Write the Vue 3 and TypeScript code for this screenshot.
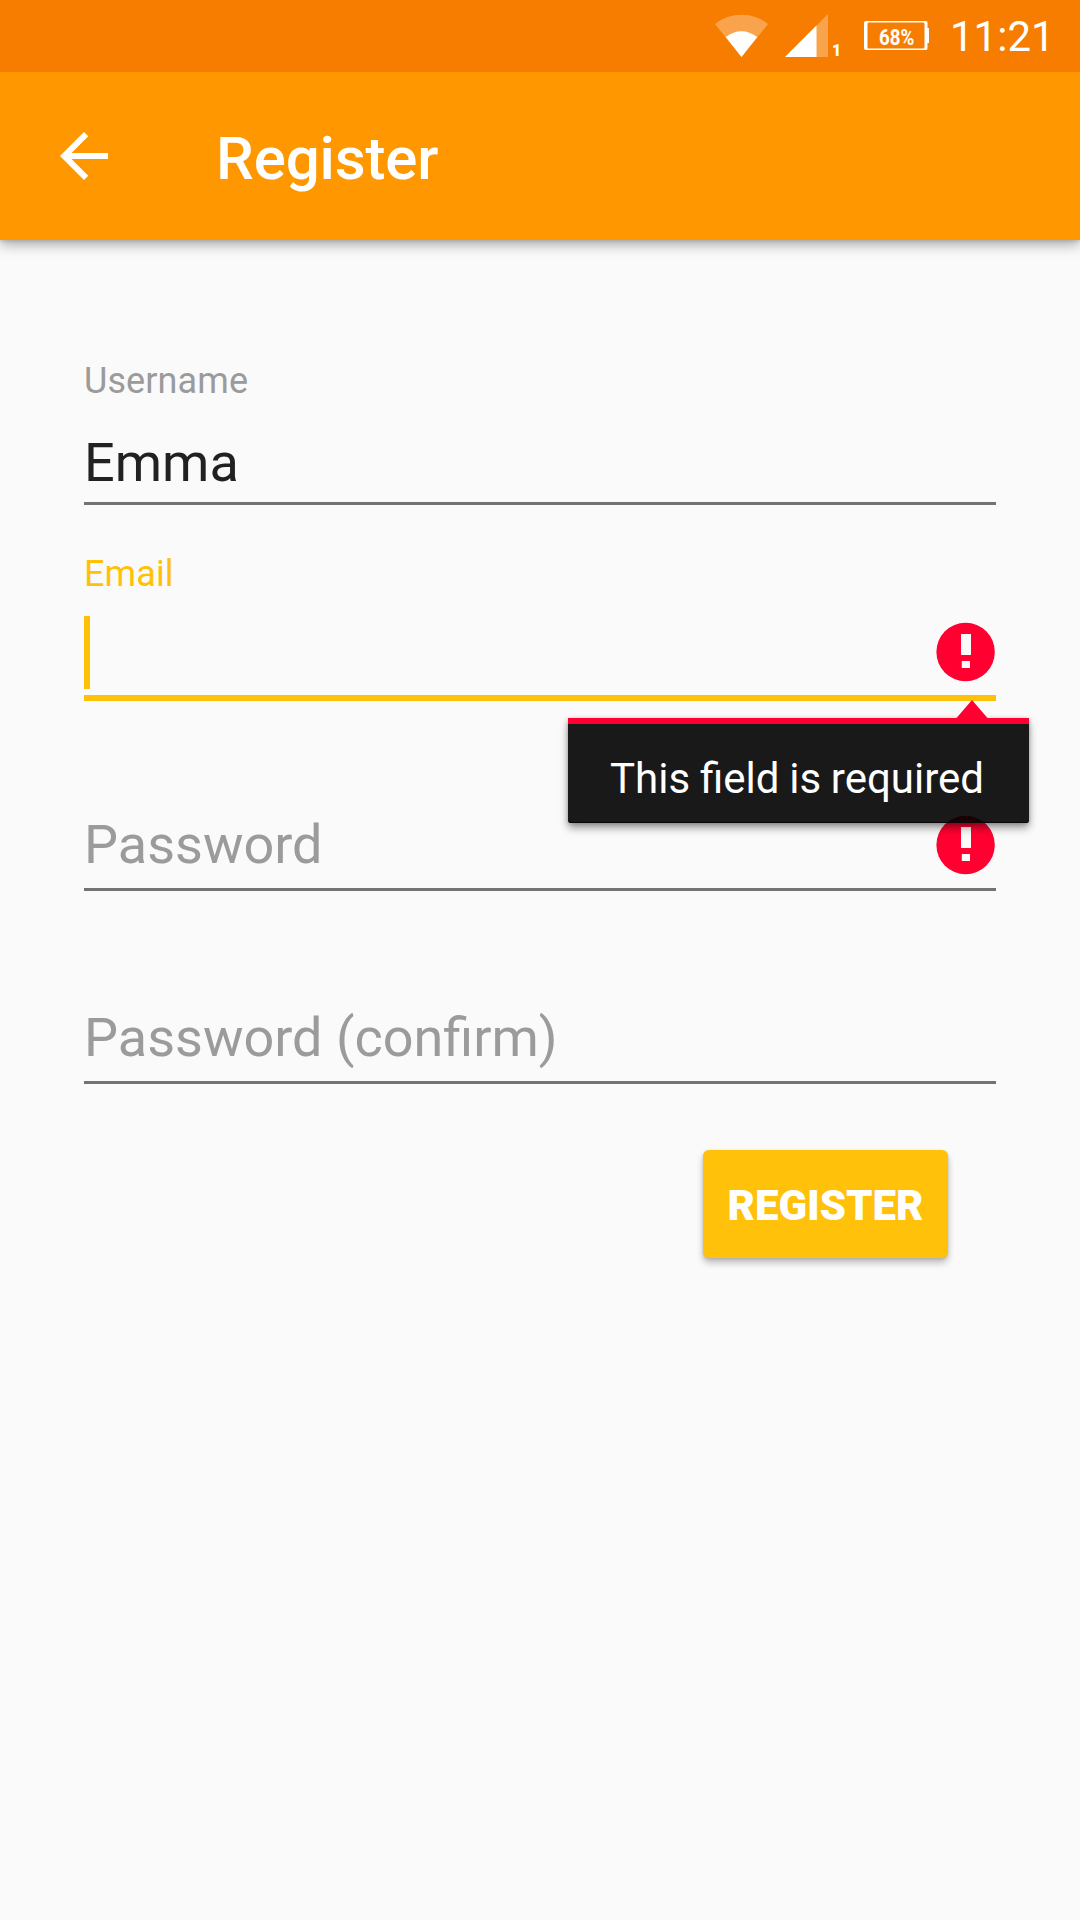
<script setup lang="ts">
interface Field {
  label: string
  value: string
  focused: boolean
  error: string
  showTooltip: boolean
}

const fields: Field[] = [
  { label: 'Username', value: 'Emma', focused: false, error: '', showTooltip: false },
  { label: 'Email', value: '', focused: true, error: 'This field is required', showTooltip: true },
  { label: 'Password', value: '', focused: false, error: 'This field is required', showTooltip: false },
  { label: 'Password (confirm)', value: '', focused: false, error: '', showTooltip: false },
]
</script>

<template>
  <div class="screen">
    <div class="status-bar">
      <svg class="wifi" width="54" height="43" viewBox="0 0 54 43">
        <path d="M26.5 43 L0 10 A42.5 42.5 0 0 1 53 10 Z" fill="#fff" fill-opacity="0.3" />
        <path d="M26.5 43 L10.7 22.9 Q26.5 11.6 42.3 22.9 Z" fill="#fff" />
      </svg>
      <svg class="signal" width="43" height="43" viewBox="0 0 43 43">
        <path d="M0 43 L43 0 V43 Z" fill="#fff" fill-opacity="0.3" />
        <path d="M0 43 L31.5 11.5 V43 Z" fill="#fff" />
      </svg>
      <span class="sim">1</span>
      <div class="battery">
        <svg width="65" height="29" viewBox="0 0 65 29">
          <path
            fill="#fff"
            fill-rule="evenodd"
            d="M2 0 H62 Q63.5 0 63.5 2 V7 H65 V22 H63.5 V27 Q63.5 29 62 29 H2 Q0 29 0 27 V2 Q0 0 2 0 Z M4.5 1.5 Q3.5 1.5 3.5 3 V26 Q3.5 27.5 4.5 27.5 H59 Q60.5 27.5 60.5 26 V3 Q60.5 1.5 59 1.5 Z"
          />
        </svg>
        <span class="level">68%</span>
      </div>
      <span class="clock">11:21</span>
    </div>

    <header class="app-bar">
      <svg class="back" width="72" height="72" viewBox="0 0 24 24">
        <path fill="#fff" d="M20 11H7.83l5.59-5.59L12 4l-8 8 8 8 1.41-1.41L7.83 13H20v-2z" />
      </svg>
      <h1 class="title">Register</h1>
    </header>

    <main class="form">
      <div v-for="field in fields" :key="field.label" class="field" :class="{ focused: field.focused }">
        <div class="label">{{ field.value || field.focused ? field.label : '' }}</div>
        <div class="control">
          <span v-if="field.value" class="value">{{ field.value }}</span>
          <span v-else-if="field.focused" class="cursor"></span>
          <span v-else class="hint">{{ field.label }}</span>
          <svg v-if="field.error" class="error" width="60" height="60" viewBox="0 0 60 60">
            <circle cx="29.6" cy="30" r="29.2" fill="#ff0031" />
            <path fill="#fafafa" d="M25 12h10v21H25z M25.8 39h8.2v7h-8.2z" />
          </svg>
        </div>
        <div class="underline"></div>
        <div v-if="field.showTooltip" class="tooltip">
          <svg class="pointer" width="32" height="18" viewBox="0 0 32 18">
            <path fill="#ff0031" d="M0.5 18 L16 0 L31.5 18 Z" />
          </svg>
          {{ field.error }}
        </div>
      </div>
      <button class="submit" type="button">REGISTER</button>
    </main>
  </div>
</template>

<style>
body {
  margin: 0;
}
</style>

<style scoped>
.screen {
  width: 1080px;
  height: 1920px;
  display: flex;
  flex-direction: column;
  overflow: hidden;
  background: #fafafa;
  font-family: Roboto, sans-serif;
}

.status-bar {
  position: relative;
  z-index: 1;
  box-sizing: border-box;
  height: 72px;
  flex: none;
  display: flex;
  align-items: flex-start;
  padding-left: 715px;
  background: #f77d00;
  color: #fff;
}

.wifi {
  margin-top: 14px;
}

.signal {
  margin: 14px 0 0 16px;
}

.sim {
  width: 10px;
  margin: 41px 0 0 4px;
  font-size: 16px;
  font-weight: 900;
  line-height: 19px;
}

.battery {
  position: relative;
  width: 65px;
  height: 29px;
  margin: 21px 0 0 22px;
}

.battery svg {
  display: block;
}

.level {
  position: absolute;
  left: 15px;
  top: 3px;
  font-size: 22.5px;
  font-weight: 700;
  line-height: 26px;
  transform: scaleX(0.83);
  transform-origin: left;
}

.clock {
  margin: 12px 0 0 21px;
  font-size: 42px;
  line-height: 50px;
}

.app-bar {
  height: 168px;
  flex: none;
  display: flex;
  align-items: center;
  background: #ff9800;
  box-shadow: 0 5px 12px rgba(0, 0, 0, 0.3), 0 1px 4px rgba(0, 0, 0, 0.14);
}

.back {
  margin-left: 48px;
}

.title {
  margin: 6px 0 0 96px;
  color: #fff;
  font-size: 60px;
  font-weight: 500;
  line-height: 70px;
  letter-spacing: -0.12px;
}

.form {
  display: flex;
  flex-direction: column;
  padding: 72px 84px 0;
}

.field {
  position: relative;
  height: 193px;
}

.label {
  box-sizing: border-box;
  height: 90px;
  padding-top: 48px;
  color: #9b9b9b;
  font-size: 36px;
  line-height: 42px;
  letter-spacing: 0.1px;
}

.focused .label {
  color: #ffc107;
}

.control {
  height: 100px;
  display: flex;
  align-items: flex-start;
}

.value {
  margin-top: 29px;
  color: #212121;
  font-size: 54px;
  line-height: 64px;
}

.hint {
  margin-top: 25px;
  color: #9b9b9b;
  font-size: 54px;
  line-height: 64px;
}

.cursor {
  width: 6px;
  height: 73px;
  margin-top: 21px;
  background: #ffc107;
}

.error {
  margin: 27px 0 0 auto;
}

.underline {
  height: 3px;
  background: #737373;
}

.focused .underline {
  height: 6px;
  background: #ffc107;
}

.tooltip {
  position: absolute;
  z-index: 1;
  left: 484px;
  top: 213px;
  box-sizing: border-box;
  width: 461px;
  height: 105px;
  padding: 30px 0 0 42px;
  border-top: 6px solid #ff0031;
  border-radius: 0 0 3px 3px;
  background: rgba(0, 0, 0, 0.9) padding-box;
  box-shadow: inset 0 -1px 0 #080808, 0 5px 9px rgba(0, 0, 0, 0.38), 0 1px 4px rgba(0, 0, 0, 0.2);
  color: #fff;
  font-size: 42px;
  line-height: 50px;
  word-spacing: -0.6px;
  white-space: nowrap;
}

.pointer {
  position: absolute;
  left: 388px;
  top: -24px;
}

.submit {
  align-self: flex-end;
  width: 245px;
  height: 108px;
  margin: 66px 48px 0 0;
  padding: 4px 0 0;
  border: 0;
  border-radius: 6px;
  background: #ffc10a;
  box-shadow: 0 5px 7px rgba(0, 0, 0, 0.24), 0 1px 3px rgba(0, 0, 0, 0.14);
  color: #fff;
  font-family: inherit;
  font-size: 42px;
  font-weight: 900;
  line-height: 50px;
}
</style>
